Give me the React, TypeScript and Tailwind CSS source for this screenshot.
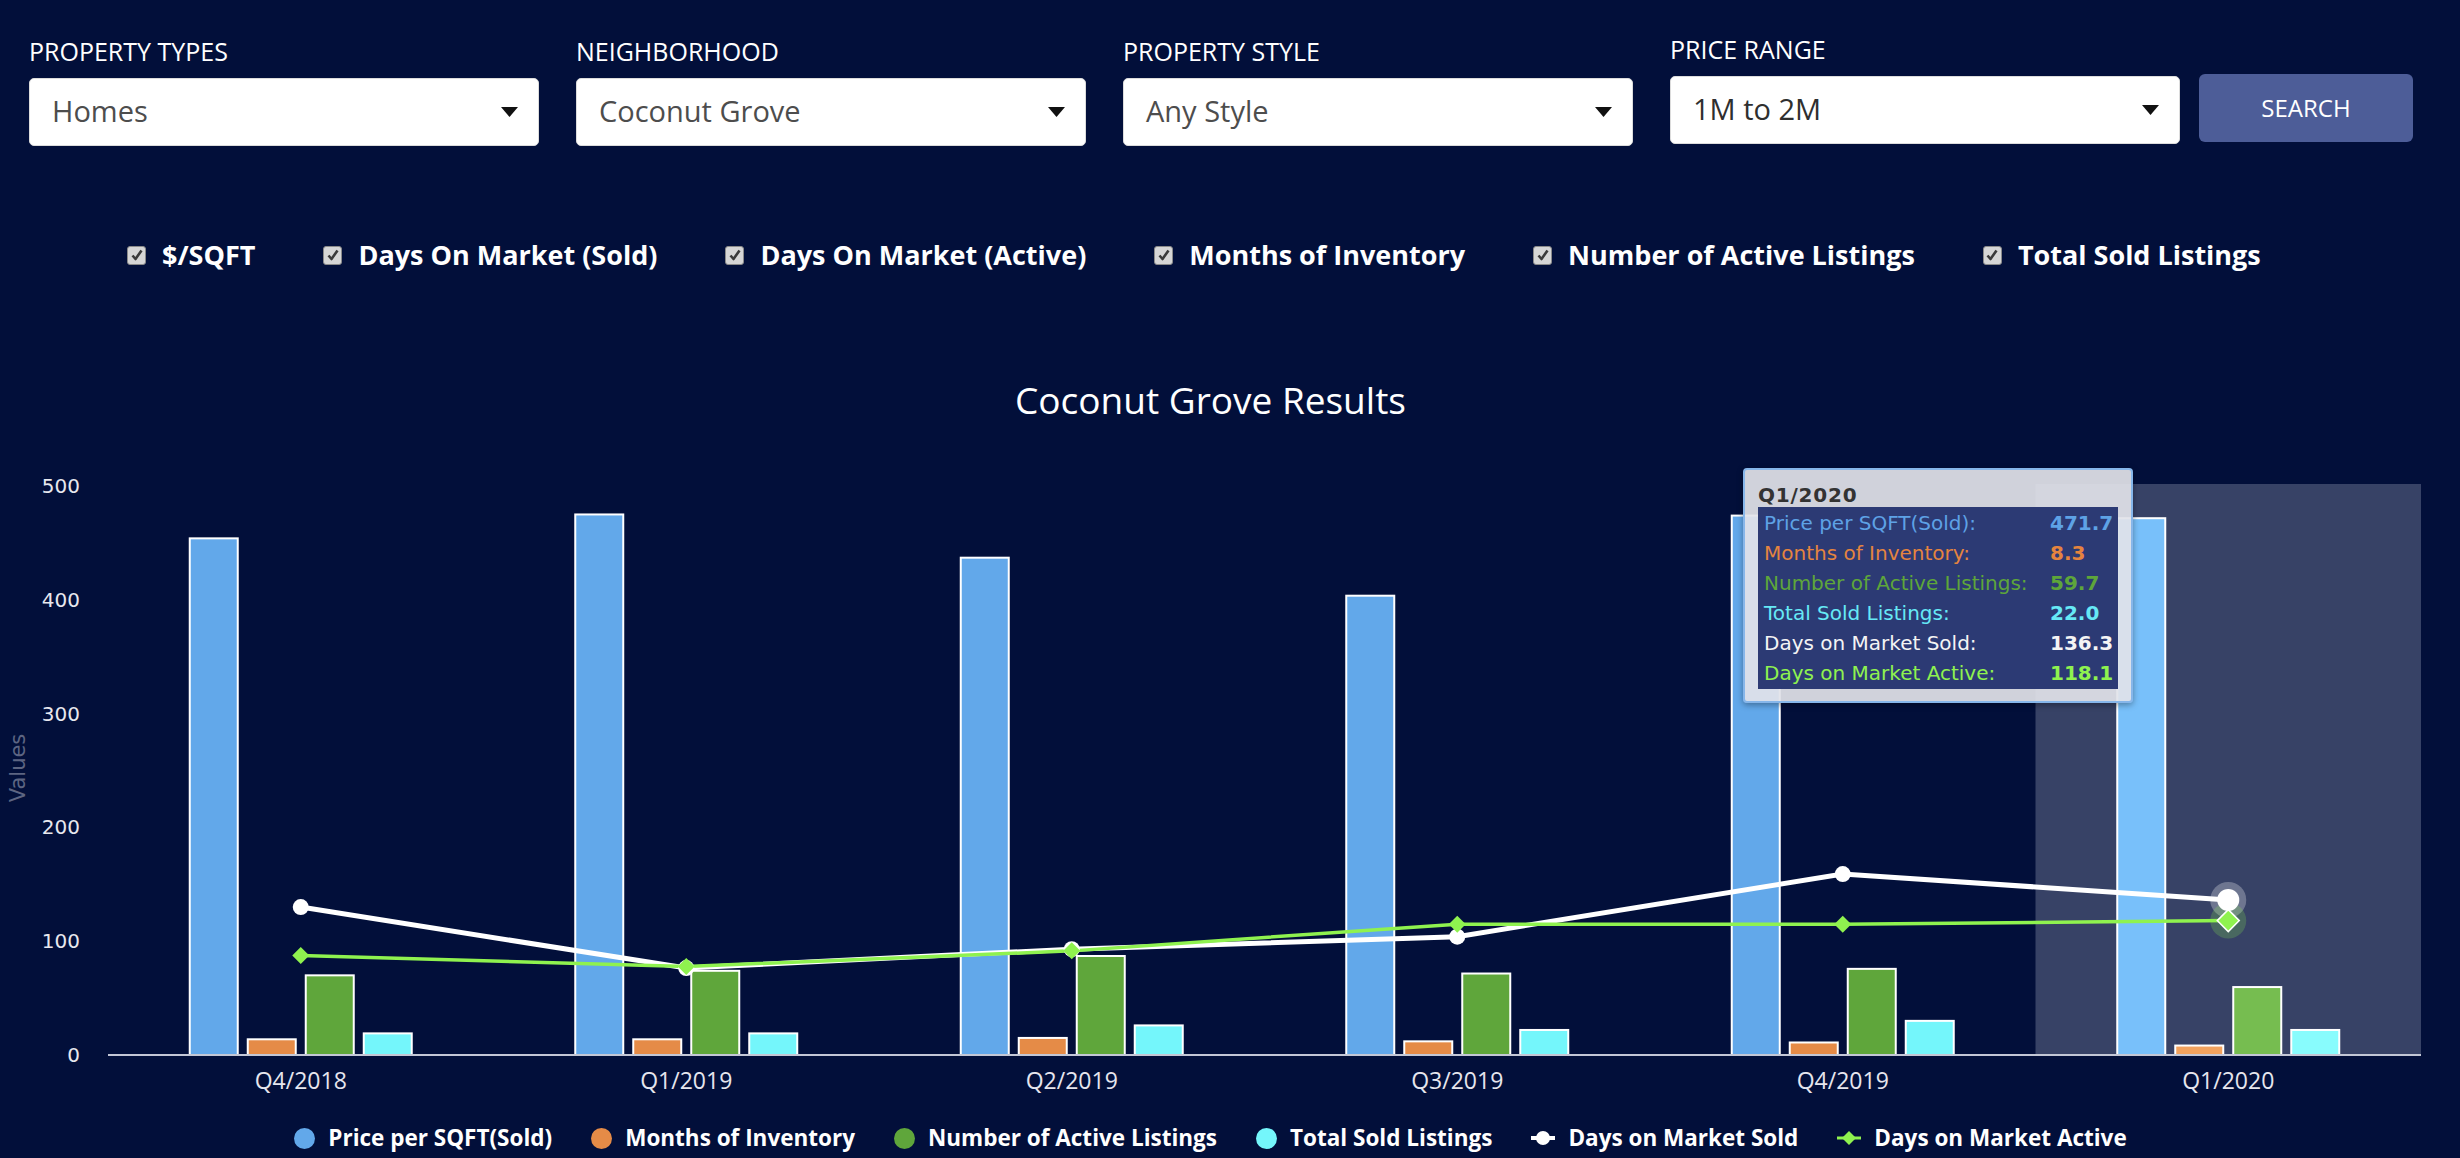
import React from 'react';

const X0 = 108;
const PITCH = 385.5;
const Y0 = 1055;
const K = 1.138;

const cats = ['Q4/2018', 'Q1/2019', 'Q2/2019', 'Q3/2019', 'Q4/2019', 'Q1/2020'];

const data = [
  { bars: [454, 13.8, 70, 19], sold: 130, active: 87.4 },
  { bars: [475, 13.8, 74, 19], sold: 76.4, active: 77.8 },
  { bars: [437, 15, 87, 26], sold: 93, active: 91.5 },
  { bars: [403.6, 12, 71.6, 22], sold: 104, active: 115 },
  { bars: [474, 11, 75.7, 30], sold: 159, active: 115 },
  { bars: [471.7, 8.3, 59.7, 22], sold: 136.3, active: 118.1 },
];

const barColors = ['#62a8ea', '#e58b47', '#5fa63b', '#74f6fb'];
const hiColors = ['#78c0fa', '#f2a25e', '#76bd50', '#88fcfd'];
const barOffsets = [-111, -53, 5, 63];

const cx = (i: number) => X0 + PITCH * (i + 0.5);
const cy = (v: number) => Y0 - v * K;

const filters = [
  { label: 'PROPERTY TYPES', value: 'Homes', color: 'text-[#4d4d4d]' },
  { label: 'NEIGHBORHOOD', value: 'Coconut Grove', color: 'text-[#4d4d4d]' },
  { label: 'PROPERTY STYLE', value: 'Any Style', color: 'text-[#4d4d4d]' },
  { label: 'PRICE RANGE', value: '1M to 2M', color: 'text-[#2f2f2f]' },
];

const checks = [
  '$/SQFT',
  'Days On Market (Sold)',
  'Days On Market (Active)',
  'Months of Inventory',
  'Number of Active Listings',
  'Total Sold Listings',
];

const tooltipRows = [
  { label: 'Price per SQFT(Sold):', value: '471.7', color: 'text-[#5ea2e6]' },
  { label: 'Months of Inventory:', value: '8.3', color: 'text-[#e5843f]' },
  { label: 'Number of Active Listings:', value: '59.7', color: 'text-[#5ea63a]' },
  { label: 'Total Sold Listings:', value: '22.0', color: 'text-[#66e9f6]' },
  { label: 'Days on Market Sold:', value: '136.3', color: 'text-[#f4f4f4]' },
  { label: 'Days on Market Active:', value: '118.1', color: 'text-[#8ff24f]' },
];

const Caret = () => (
  <svg width="17" height="10" viewBox="0 0 17 10">
    <path d="M0 0 L17 0 L8.5 10 Z" fill="#111" />
  </svg>
);

const CheckBox = () => (
  <div className="w-[19px] h-[19px] rounded-[3px] border border-[#8a8a8a] bg-[#d6d6d6] flex items-center justify-center">
    <svg width="14" height="14" viewBox="0 0 14 14">
      <path d="M2.5 7.5 L5.5 11 L11.5 2.5" fill="none" stroke="#3a3a3a" strokeWidth="2.6" strokeLinejoin="round" />
    </svg>
  </div>
);

const Chart = () => {
  const soldPts = data.map((d, i) => `${cx(i)},${cy(d.sold)}`).join(' ');
  const activePts = data.map((d, i) => `${cx(i)},${cy(d.active)}`).join(' ');
  const diamond = (x: number, y: number, r: number) =>
    `M${x} ${y - r} L${x + r} ${y} L${x} ${y + r} L${x - r} ${y} Z`;

  return (
    <svg width="2421" height="698" viewBox="0 425 2421 698" className="block">
      {/* hovered category band */}
      <rect x={X0 + PITCH * 5} y={484} width={PITCH} height={Y0 - 484} fill="#374266" />

      {/* y axis */}
      {[0, 100, 200, 300, 400, 500].map((v) => (
        <text
          key={v}
          x={80}
          y={cy(v) + 7}
          textAnchor="end"
          fill="#e8e8ee"
          fontSize="20"
          fontFamily="'DejaVu Sans', sans-serif"
        >
          {v}
        </text>
      ))}
      <text
        x={0}
        y={0}
        transform="translate(25 768) rotate(-90)"
        textAnchor="middle"
        fill="#5d6582"
        fontSize="21"
        fontFamily="'DejaVu Sans', sans-serif"
      >
        Values
      </text>

      {/* bars */}
      {data.map((d, i) =>
        d.bars.map((v, j) => (
          <rect
            key={`${i}-${j}`}
            x={cx(i) + barOffsets[j]}
            y={cy(v)}
            width={48}
            height={v * K}
            fill={i === 5 ? hiColors[j] : barColors[j]}
            stroke="#ffffff"
            strokeWidth="2"
          />
        ))
      )}

      {/* x axis */}
      <line x1={X0} y1={Y0} x2={2421} y2={Y0} stroke="#c3c7d6" strokeWidth="2" />
      {cats.map((c, i) => (
        <text
          key={c}
          x={cx(i)}
          y={1089}
          textAnchor="middle"
          fill="#e6e6ee"
          fontSize="23"
          fontFamily="'Open Sans', sans-serif"
        >
          {c}
        </text>
      ))}

      {/* lines */}
      <polyline points={soldPts} fill="none" stroke="#ffffff" strokeWidth="5" />
      <polyline points={activePts} fill="none" stroke="#8ff24f" strokeWidth="3.5" />
      {data.slice(0, 5).map((d, i) => (
        <g key={i}>
          <circle cx={cx(i)} cy={cy(d.sold)} r={8} fill="#ffffff" />
          <path d={diamond(cx(i), cy(d.active), 8.5)} fill="#8ff24f" />
        </g>
      ))}
      <circle cx={cx(5)} cy={cy(136.3)} r={18} fill="#ffffff" fillOpacity="0.28" />
      <circle cx={cx(5)} cy={cy(118.1)} r={18} fill="#8ff24f" fillOpacity="0.22" />
      <circle cx={cx(5)} cy={cy(136.3)} r={11} fill="#ffffff" />
      <path d={diamond(cx(5), cy(118.1), 11)} fill="#8ff24f" stroke="#ffffff" strokeWidth="1.5" />
    </svg>
  );
};

const Legend = () => {
  const items = [
    { label: 'Price per SQFT(Sold)', kind: 'dot', color: '#62a8ea' },
    { label: 'Months of Inventory', kind: 'dot', color: '#e58b47' },
    { label: 'Number of Active Listings', kind: 'dot', color: '#5fa63b' },
    { label: 'Total Sold Listings', kind: 'dot', color: '#74f6fb' },
    { label: 'Days on Market Sold', kind: 'circle', color: '#ffffff' },
    { label: 'Days on Market Active', kind: 'diamond', color: '#8ff24f' },
  ];
  return (
    <div className="w-[2421px] h-[30px] flex items-center justify-center gap-[39px]">
      {items.map((it) => (
        <div key={it.label} className="flex items-center gap-[13px]">
          {it.kind === 'dot' && (
            <svg width="21" height="21" viewBox="0 0 21 21">
              <circle cx="10.5" cy="10.5" r="10.5" fill={it.color} />
            </svg>
          )}
          {it.kind === 'circle' && (
            <svg width="24" height="20" viewBox="0 0 24 20">
              <line x1="0" y1="10" x2="24" y2="10" stroke={it.color} strokeWidth="4" />
              <circle cx="12" cy="10" r="7" fill={it.color} />
            </svg>
          )}
          {it.kind === 'diamond' && (
            <svg width="24" height="20" viewBox="0 0 24 20">
              <line x1="0" y1="10" x2="24" y2="10" stroke={it.color} strokeWidth="3" />
              <path d="M12 3 L19 10 L12 17 L5 10 Z" fill={it.color} />
            </svg>
          )}
          <span className="text-[22.5px] leading-[30px] font-bold text-white">{it.label}</span>
        </div>
      ))}
    </div>
  );
};

const Tooltip = () => (
  <div className="absolute left-[1743px] top-[43px] w-[390px] h-[235px] rounded-[4px] border-2 border-[#86b6ea] bg-[rgba(226,227,233,0.92)] shadow-[0_2px_6px_rgba(0,0,0,0.35)] pt-[13px] pl-[13px] font-['DejaVu_Sans',sans-serif]">
    <div className="text-[20px] leading-[24px] font-bold text-[#333333] tracking-[0.8px]">Q1/2020</div>
    <div className="w-[360px] h-[182px] bg-[#2c3a74] pt-[1px] pl-[6px]">
      {tooltipRows.map((r) => (
        <div key={r.label} className={`flex h-[30px] items-center text-[20px] ${r.color}`}>
          <span className="w-[286px] whitespace-nowrap">{r.label}</span>
          <span className="font-bold">{r.value}</span>
        </div>
      ))}
    </div>
  </div>
);

export default function App() {
  return (
    <div className="w-[2460px] h-[1158px] overflow-hidden bg-[#020f3a] font-['Open_Sans',sans-serif] text-white">
      {/* Filters */}
      <div className="flex items-start pl-[29px] pt-[35px]">
        {filters.map((f, i) => (
          <div key={f.label} className={`w-[510px] ${i > 0 ? 'ml-[37px]' : ''} ${i === 3 ? '-mt-[2px]' : ''}`}>
            <div className="text-[25px] leading-[32px] text-white">{f.label}</div>
            <div className="mt-[11px] h-[68px] bg-white rounded-[5px] border border-[#dcdcdc] flex items-center justify-between pl-[22px] pr-[20px]">
              <span className={`text-[29px] leading-[38px] -mt-[2px] ${f.color}`}>{f.value}</span>
              <Caret />
            </div>
          </div>
        ))}
        <button className="ml-[19px] mt-[39px] w-[214px] h-[68px] rounded-[6px] bg-[#4d5d98] text-[24px] text-white">
          SEARCH
        </button>
      </div>

      {/* Series toggles */}
      <div className="mt-[89px] h-[40px] flex items-center pl-[127px] gap-[68px]">
        {checks.map((c) => (
          <div key={c} className="flex items-center gap-[16px]">
            <CheckBox />
            <span className="text-[27px] leading-[34px] font-bold text-white">{c}</span>
          </div>
        ))}
      </div>

      {/* Chart */}
      <div className="mt-[100px] w-[2421px] text-center text-[37px] leading-[50px] text-white">
        Coconut Grove Results
      </div>
      <div className="relative w-[2421px]">
        <Chart />
        <Tooltip />
      </div>
      <Legend />
    </div>
  );
}
